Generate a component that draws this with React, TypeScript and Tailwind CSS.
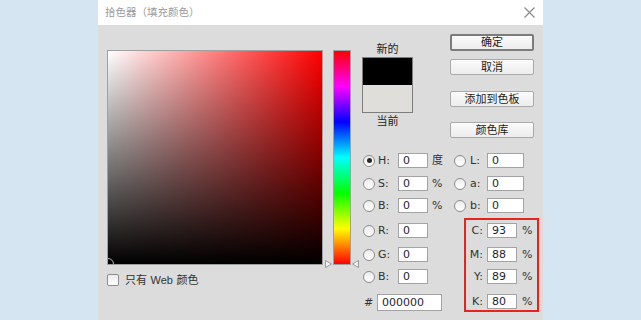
import React from "react";

const FONT = "font-['DejaVu_Sans','Noto_Sans_CJK_SC',sans-serif]";

function Radio({ checked }: { checked?: boolean }) {
  return (
    <span className="flex h-[12px] w-[12px] shrink-0 items-center justify-center rounded-full border border-[#8c8c8c] bg-[linear-gradient(#ececec,#ffffff)]">
      {checked && <span className="h-[5px] w-[5px] rounded-full bg-[#2a2a2a]" />}
    </span>
  );
}

function Field({ v, w, h = "h-[15px]" }: { v: string; w: string; h?: string }) {
  return (
    <div
      className={`flex ${h} ${w} shrink-0 items-center border border-[#a3a3a3] bg-white pl-[4px] text-[11px] leading-none text-[#1f2430]`}
    >
      {v}
    </div>
  );
}

function Btn({ label, main, h = "h-[16px]", mt }: { label: string; main?: boolean; h?: string; mt: string }) {
  return (
    <div
      className={`${mt} ${h} flex w-[84px] items-center justify-center rounded-[2px] bg-[linear-gradient(#fbfbfb,#ececec)] text-[11px] leading-none text-[#222] ${
        main ? "border-2 border-[#7c7c7c]" : "border border-[#a9a9a9]"
      }`}
    >
      {label}
    </div>
  );
}

function LeftRow({
  mt,
  label,
  v,
  unit,
  checked,
}: {
  mt: string;
  label: string;
  v: string;
  unit?: string;
  checked?: boolean;
}) {
  return (
    <div className={`${mt} flex h-[15px] items-center`}>
      <Radio checked={checked} />
      <span className="ml-[3px] w-[20px] text-[11px] font-medium leading-none text-[#333]">{label}</span>
      <Field v={v} w="w-[30px]" />
      {unit && <span className="ml-[4px] text-[11px] leading-none text-[#333]">{unit}</span>}
    </div>
  );
}

function RightRow({ mt, label, v }: { mt: string; label: string; v: string }) {
  return (
    <div className={`${mt} flex h-[15px] items-center`}>
      <Radio />
      <span className="ml-[4px] w-[17px] text-[11px] font-medium leading-none text-[#333]">{label}</span>
      <Field v={v} w="w-[37px]" />
    </div>
  );
}

function CmykRow({ mt, label, v }: { mt: string; label: string; v: string }) {
  return (
    <div className={`${mt} flex h-[15px] items-center`}>
      <span className="w-[17px] text-right text-[11px] font-medium leading-none text-[#333]">{label}</span>
      <span className="ml-[4px]">
        <Field v={v} w="w-[30px]" />
      </span>
      <span className="ml-[5px] text-[11px] leading-none text-[#333]">%</span>
    </div>
  );
}

export default function App() {
  return (
    <div className={`flex h-[320px] w-[641px] overflow-hidden bg-[#d5e5f1] pl-[98px] ${FONT}`}>
      <div className="flex h-[320px] w-[445px] flex-col">
        {/* title bar */}
        <div className="flex h-[25px] shrink-0 items-center justify-between bg-white pl-[7px] pr-[8px]">
          <span className="text-[10.5px] leading-none text-[#9a9a9a]">拾色器（填充颜色）</span>
          <svg width="11" height="11" viewBox="0 0 11 11">
            <path d="M0.5 0.5 L10.5 10.5 M10.5 0.5 L0.5 10.5" stroke="#8a8a8a" strokeWidth="1.2" fill="none" />
          </svg>
        </div>
        {/* body */}
        <div className="flex flex-1 bg-[#dcdcdc] pl-[9px]">
          {/* color field column */}
          <div className="flex flex-col pt-[25px]">
            <div className="relative h-[215px] w-[216px] overflow-hidden border border-[#a0a0a0] bg-[linear-gradient(to_right,#ffffff,#ff0000)]">
              <div className="h-full w-full bg-[linear-gradient(to_top,#000000,rgba(0,0,0,0))]" />
              <div className="absolute bottom-[-6px] left-[-6px] h-[12px] w-[12px] rounded-full border border-[#bbbbbb]" />
            </div>
            <div className="mt-[9px] flex items-center">
              <span className="h-[12px] w-[12px] rounded-[2px] border border-[#8d8d8d] bg-[linear-gradient(#ececec,#ffffff)]" />
              <span className="ml-[6px] text-[11px] leading-none text-[#333]">
                只有 <span className="font-['Liberation_Sans',sans-serif]">Web</span> 颜色
              </span>
            </div>
          </div>
          {/* hue bar */}
          <div className="relative ml-[10px] mt-[25px] h-[215px] w-[18px] border border-[#a0a0a0] bg-[linear-gradient(to_bottom,#ff0000,#ff00ff,#0000ff,#00ffff,#00ff00,#ffff00,#ff0000)]">
            <svg className="absolute bottom-[-4px] left-[-9px]" width="7" height="8" viewBox="0 0 7 8">
              <path d="M0.5 0.5 L6.5 4 L0.5 7.5 Z" fill="#f2f2f2" stroke="#9a9a9a" strokeWidth="1" />
            </svg>
            <svg className="absolute bottom-[-4px] right-[-9px]" width="7" height="8" viewBox="0 0 7 8">
              <path d="M6.5 0.5 L0.5 4 L6.5 7.5 Z" fill="#f2f2f2" stroke="#9a9a9a" strokeWidth="1" />
            </svg>
          </div>
          {/* right area */}
          <div className="flex flex-col">
            <div className="flex h-[128px]">
              <div className="ml-[11px] flex w-[51px] flex-col items-center pt-[18px]">
                <span className="h-[14px] text-[11px] leading-[14px] text-[#222]">新的</span>
                <div className="flex h-[56px] w-[51px] flex-col border border-[#7d7d7d]">
                  <div className="h-[27px] bg-black" />
                  <div className="flex-1 bg-[#e0deda]" />
                </div>
                <span className="mt-[2px] h-[14px] text-[11px] leading-[14px] text-[#222]">当前</span>
              </div>
              <div className="ml-[37px] flex flex-col pt-[9px]">
                <Btn label="确定" main h="h-[17px]" mt="mt-0" />
                <Btn label="取消" mt="mt-[8px]" />
                <Btn label="添加到色板" mt="mt-[16px]" />
                <Btn label="颜色库" mt="mt-[15px]" />
              </div>
            </div>
            <div className="flex">
              <div className="ml-[12px] flex w-[91px] flex-col">
                <LeftRow mt="mt-0" label="H:" v="0" unit="度" checked />
                <LeftRow mt="mt-[8px]" label="S:" v="0" unit="%" />
                <LeftRow mt="mt-[7px]" label="B:" v="0" unit="%" />
                <LeftRow mt="mt-[10px]" label="R:" v="0" />
                <LeftRow mt="mt-[9px]" label="G:" v="0" />
                <LeftRow mt="mt-[7px]" label="B:" v="0" />
                <div className="mt-[10px] flex h-[17px] items-center">
                  <span className="ml-[1px] w-[13px] text-[11px] leading-none text-[#333]">#</span>
                  <Field v="000000" w="w-[65px]" h="h-[17px]" />
                </div>
              </div>
              <div className="flex flex-col">
                <RightRow mt="mt-0" label="L:" v="0" />
                <RightRow mt="mt-[8px]" label="a:" v="0" />
                <RightRow mt="mt-[7px]" label="b:" v="0" />
                <div className="ml-[10px] mt-[5px] flex w-[75px] flex-col border-2 border-[#e8231c] pb-[1px] pt-[3px]">
                  <CmykRow mt="mt-0" label="C:" v="93" />
                  <CmykRow mt="mt-[9px]" label="M:" v="88" />
                  <CmykRow mt="mt-[7px]" label="Y:" v="89" />
                  <CmykRow mt="mt-[10px]" label="K:" v="80" />
                </div>
              </div>
            </div>
          </div>
        </div>
      </div>
    </div>
  );
}
